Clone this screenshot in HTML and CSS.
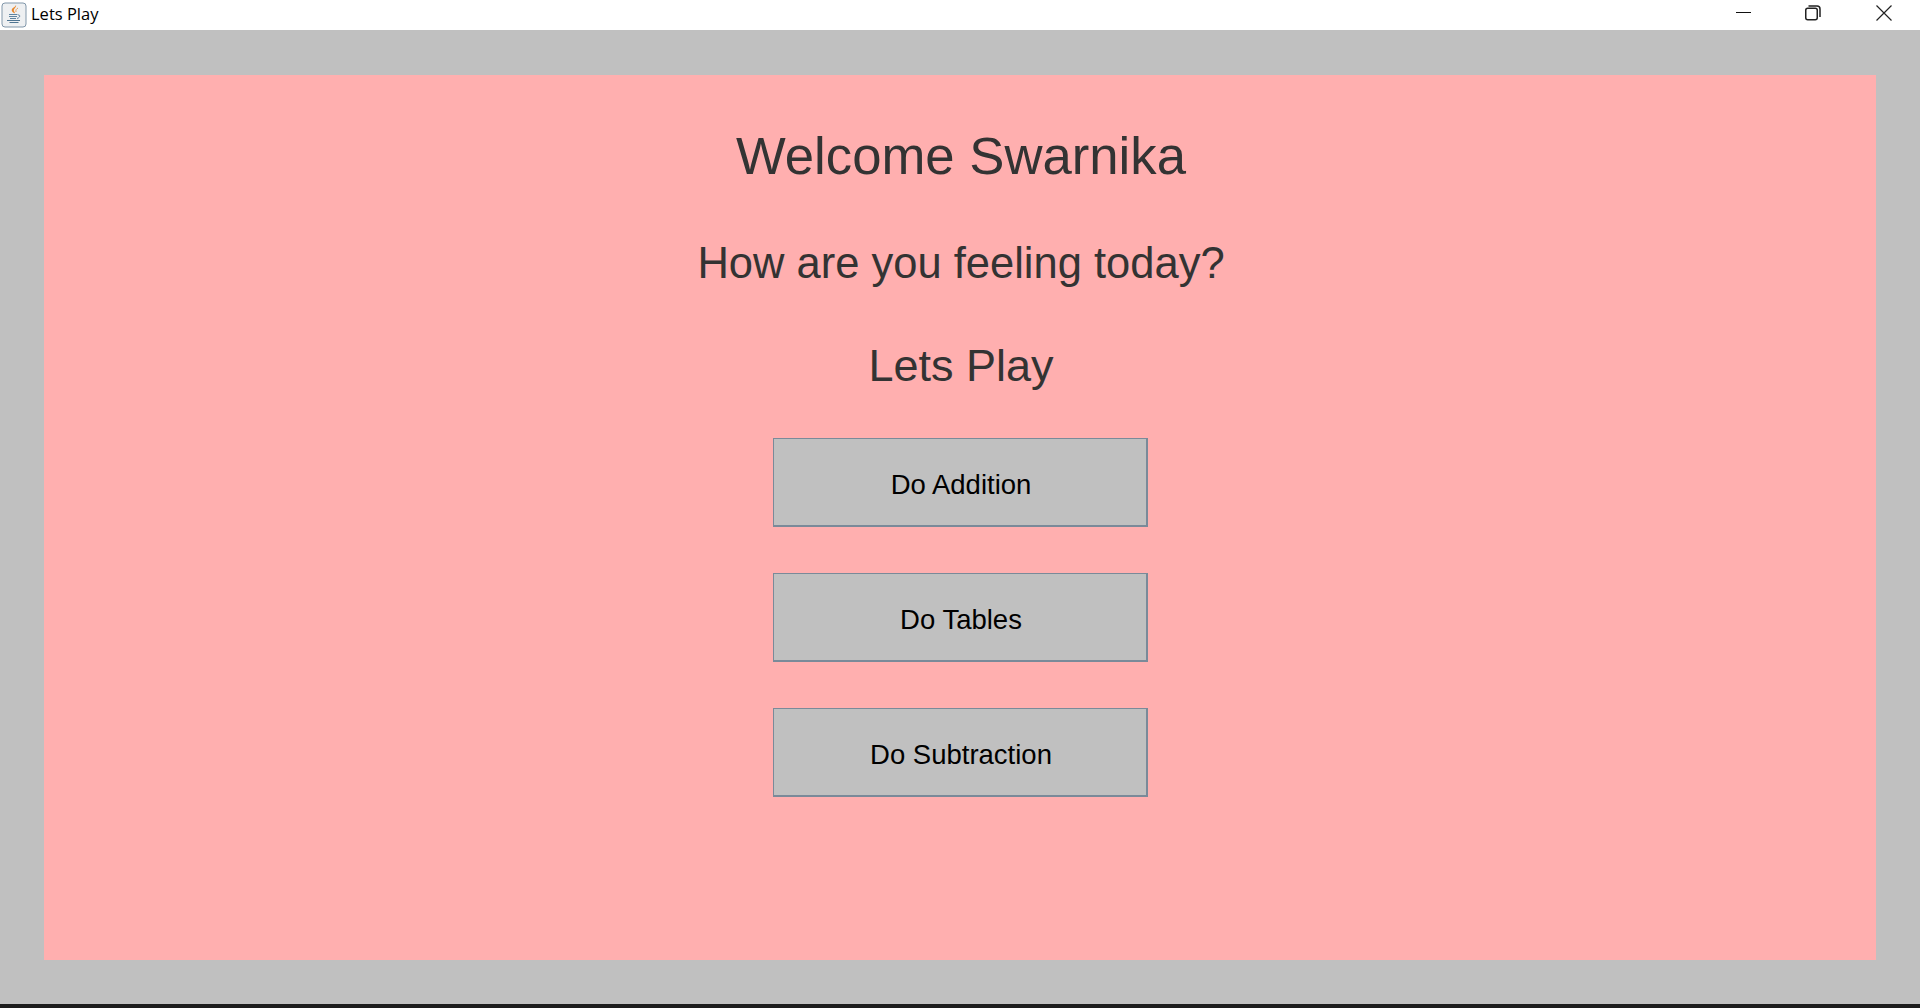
FILE: index.html
```html
<!DOCTYPE html>
<html lang="en">

<head>
    <meta charset="UTF-8">
    <title>Lets Play</title>
    <link rel="stylesheet" href="styles.css">
</head>

<body>
    <div class="titlebar">
        <div class="title-left">
            <svg class="app-icon" width="26" height="26" viewBox="0 0 26 26">
                <rect x="1" y="1" width="24" height="24" rx="3" fill="#eef0f2" stroke="#8197aa" />
                <path d="M15 3c1 2-3 4-2 6 .4 1 1 1.500 1 2.500-2-1-4-2.500-3-4.500 .8-1.500 3.500-2 4-4z" fill="#e8872c" />
                <path d="M17 6c-1.500 1-2.500 1.500-2 4" fill="none" stroke="#e8a05c" />
                <path d="M8 12.500h8.500M8 14.500h8M9 16.500h6" fill="none" stroke="#5f84a0" stroke-width="1.200" />
                <path d="M17 13c2.500-.5 2.500 2.500-1 3.500" fill="none" stroke="#5f84a0" />
                <path d="M6 18.500h13M8.500 20.500h9" fill="none" stroke="#4f7592" stroke-width="1.200" />
            </svg>
            <span class="title-text">Lets Play</span>
        </div>
        <div class="window-btns">
            <svg width="16" height="16" viewBox="0 0 16 16">
                <path d="M0 7.500h15" stroke="#111" fill="none" />
            </svg>
            <svg class="restore" width="16" height="16" viewBox="0 0 16 16">
                <rect x="0.750" y="3.250" width="11.500" height="11.500" rx="2" fill="none" stroke="#222" stroke-width="1.500" />
                <path d="M3.500 1h8.500a3 3 0 0 1 3 3v8" fill="none" stroke="#222" stroke-width="1.500" />
            </svg>
            <svg width="16" height="16" viewBox="0 0 16 16">
                <path d="M0.500 0.500l15 15M15.500 0.500l-15 15" stroke="#222" fill="none" stroke-width="1.200" />
            </svg>
        </div>
    </div>

    <div class="stage">
        <div class="panel">
            <h1 class="welcome">Welcome Swarnika</h1>
            <h2 class="feeling">How are you feeling today?</h2>
            <h2 class="lets">Lets Play</h2>
            <div class="actions">
                <button class="action">Do Addition</button>
                <button class="action">Do Tables</button>
                <button class="action">Do Subtraction</button>
            </div>
        </div>
    </div>

    <div class="strip"></div>
</body>

</html>
```

FILE: styles.css
```css
html,
body {
    height: 100%;
}

body {
    margin: 0;
    display: flex;
    flex-direction: column;
    background-color: rgb(192, 192, 192);
    font-family: "Liberation Sans", Arial, sans-serif;
    overflow: hidden;
}

.titlebar {
    height: 30px;
    flex: none;
    display: flex;
    align-items: center;
    justify-content: space-between;
    background-color: white;
}

.title-left {
    display: flex;
    align-items: center;
    gap: 4px;
    padding-left: 1px;
    margin-top: -1px;
}

.app-icon {
    display: block;
}

.title-text {
    font-family: "Open Sans", "Noto Sans", sans-serif;
    font-size: 16.5px;
    color: black;
    margin-bottom: 2px;
}

.window-btns {
    display: flex;
    gap: 54px;
    padding-right: 28px;
    margin-top: -5px;
}

.window-btns svg {
    display: block;
}

.window-btns .restore {
    margin-left: -1px;
    margin-right: 1px;
}

.stage {
    flex: 1;
    display: flex;
    padding: 45px 44px 44px;
}

.panel {
    flex: 1;
    display: flex;
    flex-direction: column;
    align-items: center;
    background-color: rgb(255, 175, 175);
    color: rgb(51, 51, 51);
}

.welcome {
    margin: 0;
    margin-top: 47px;
    font-size: 52.7px;
    line-height: 68px;
    font-weight: normal;
    padding-left: 2px;
}

.feeling {
    margin: 0;
    margin-top: 45px;
    font-size: 43.5px;
    line-height: 56px;
    font-weight: normal;
    padding-left: 2px;
}

.lets {
    margin: 0;
    margin-top: 47px;
    font-size: 45px;
    line-height: 56px;
    font-weight: normal;
    padding-left: 2px;
}

.actions {
    margin-top: 44px;
    display: flex;
    flex-direction: column;
    gap: 46px;
}

.action {
    width: 375px;
    height: 89px;
    padding: 5px 0 0 3px;
    background-color: rgb(192, 192, 192);
    border: solid rgb(122, 138, 153);
    border-width: 1px 2px 2px 1px;
    border-radius: 0;
    font-family: "Liberation Sans", Arial, sans-serif;
    font-size: 27.5px;
    color: black;
}

.strip {
    height: 4px;
    flex: none;
    background-color: rgb(28, 28, 28);
}
```
